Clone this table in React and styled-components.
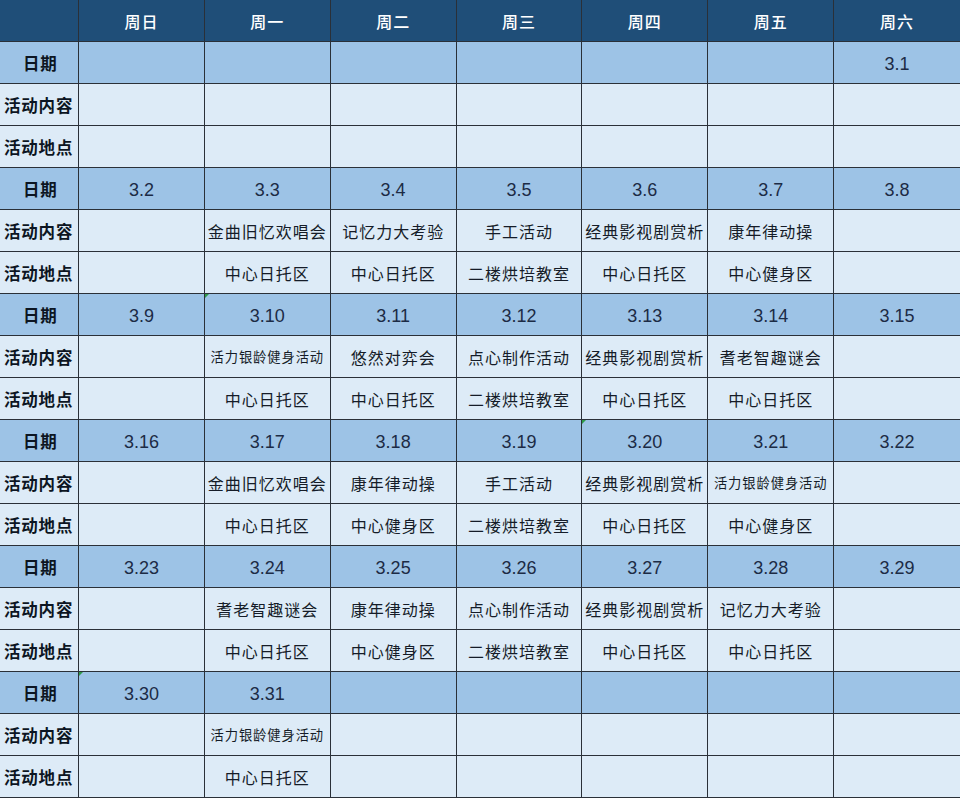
import React from "react";
import styled, { createGlobalStyle, css } from "styled-components";

const Global = createGlobalStyle`
  html, body { margin: 0; padding: 0; background: #ffffff; }
  body { font-family: "Noto Sans CJK SC", "Noto Sans", sans-serif; }
`;

const Table = styled.div`
  display: grid;
  grid-template-columns: 79px repeat(7, 1fr);
  grid-auto-rows: 42px;
  width: 960px;
  height: 798px;
  overflow: hidden;
`;

const Cell = styled.div`
  position: relative;
  box-sizing: border-box;
  display: flex;
  align-items: center;
  justify-content: center;
  border-right: 1px solid #2a3038;
  border-bottom: 1px solid #2a3038;
  white-space: nowrap;
  &:nth-child(8n) { border-right: none; }
  ${(p) =>
    p.$mark &&
    css`
      &::before {
        content: "";
        position: absolute;
        left: 0;
        top: 0;
        width: 0;
        height: 0;
        border-top: 4px solid #2e9a48;
        border-right: 4px solid transparent;
      }
    `}
`;

const HeadCell = styled(Cell)`
  background: #1f4e78;
  color: #ffffff;
  font-size: 16px;
  font-weight: 500;
  letter-spacing: 1px;
`;

const LabelCell = styled(Cell)`
  background: ${(p) => (p.$date ? "#9dc3e6" : "#ddebf7")};
  color: #0c1522;
  font-size: 16.5px;
  font-weight: 700;
  letter-spacing: 0.8px;
  justify-content: flex-start;
  padding-left: ${(p) => (p.$date ? "23px" : "4px")};
  padding-top: 1px;
`;

const DateCell = styled(Cell)`
  background: #9dc3e6;
  color: #1c2b45;
  font-family: "Liberation Sans", Arial, sans-serif;
  font-size: 18px;
  padding-top: 3px;
`;

const InfoCell = styled(Cell)`
  background: #ddebf7;
  color: #151c28;
  font-size: ${(p) => (p.$small ? "13.3px" : "16px")};
  letter-spacing: ${(p) => (p.$small ? "0.9px" : "1px")};
`;

const days = ["周日", "周一", "周二", "周三", "周四", "周五", "周六"];

const weeks = [
  {
    dates: ["", "", "", "", "", "", "3.1"],
    content: ["", "", "", "", "", "", ""],
    place: ["", "", "", "", "", "", ""],
  },
  {
    dates: ["3.2", "3.3", "3.4", "3.5", "3.6", "3.7", "3.8"],
    content: ["", "金曲旧忆欢唱会", "记忆力大考验", "手工活动", "经典影视剧赏析", "康年律动操", ""],
    place: ["", "中心日托区", "中心日托区", "二楼烘培教室", "中心日托区", "中心健身区", ""],
  },
  {
    dates: ["3.9", "3.10", "3.11", "3.12", "3.13", "3.14", "3.15"],
    marks: [1],
    content: ["", "活力银龄健身活动", "悠然对弈会", "点心制作活动", "经典影视剧赏析", "耆老智趣谜会", ""],
    place: ["", "中心日托区", "中心日托区", "二楼烘培教室", "中心日托区", "中心日托区", ""],
  },
  {
    dates: ["3.16", "3.17", "3.18", "3.19", "3.20", "3.21", "3.22"],
    marks: [4],
    content: ["", "金曲旧忆欢唱会", "康年律动操", "手工活动", "经典影视剧赏析", "活力银龄健身活动", ""],
    place: ["", "中心日托区", "中心健身区", "二楼烘培教室", "中心日托区", "中心健身区", ""],
  },
  {
    dates: ["3.23", "3.24", "3.25", "3.26", "3.27", "3.28", "3.29"],
    content: ["", "耆老智趣谜会", "康年律动操", "点心制作活动", "经典影视剧赏析", "记忆力大考验", ""],
    place: ["", "中心日托区", "中心健身区", "二楼烘培教室", "中心日托区", "中心日托区", ""],
  },
  {
    dates: ["3.30", "3.31", "", "", "", "", ""],
    marks: [0],
    content: ["", "活力银龄健身活动", "", "", "", "", ""],
    place: ["", "中心日托区", "", "", "", "", ""],
  },
];

export default function App() {
  return (
    <>
      <Global />
      <Table>
        <HeadCell />
        {days.map((d) => (
          <HeadCell key={d}>{d}</HeadCell>
        ))}
        {weeks.map((w, wi) => (
          <React.Fragment key={wi}>
            <LabelCell $date>日期</LabelCell>
            {w.dates.map((d, i) => (
              <DateCell key={"d" + i} $mark={(w.marks || []).includes(i)}>
                {d}
              </DateCell>
            ))}
            <LabelCell>活动内容</LabelCell>
            {w.content.map((c, i) => (
              <InfoCell key={"c" + i} $small={c.length >= 8}>
                {c}
              </InfoCell>
            ))}
            <LabelCell>活动地点</LabelCell>
            {w.place.map((c, i) => (
              <InfoCell key={"p" + i}>{c}</InfoCell>
            ))}
          </React.Fragment>
        ))}
      </Table>
    </>
  );
}
